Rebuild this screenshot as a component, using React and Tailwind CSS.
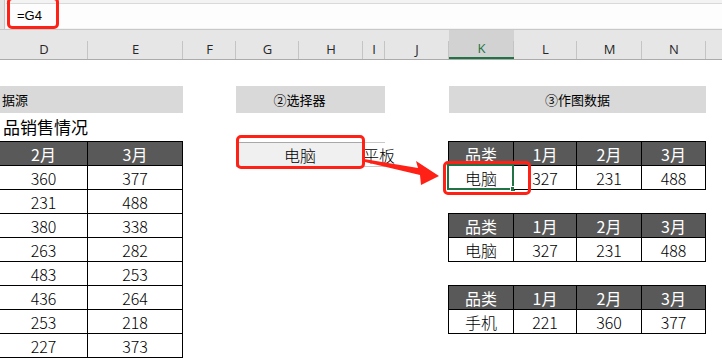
import React from 'react';

const cols = ['D', 'E', 'F', 'G', 'H', 'I', 'J', 'K', 'L', 'M', 'N', ''];
const colW = [88, 95, 53, 63, 64, 22, 64, 65, 63, 65, 64, 16];

const feb = [360, 231, 380, 263, 483, 436, 253, 227];
const mar = [377, 488, 338, 282, 253, 264, 218, 373];

const cjk = { fontFamily: '"Noto Sans CJK SC", "Noto Sans", sans-serif' };

const ColumnHeader = () => (
  <div className="flex h-[30px] bg-[#e6e6e6] border-b border-[#ababab]">
    {cols.map((c, i) => (
      <div
        key={i}
        style={{ width: colW[i] }}
        className={
          c === 'K'
            ? 'relative flex items-center justify-center shrink-0 bg-[#d2d2d2] border-b-2 border-[#217346] text-[13px] text-[#217346]'
            : 'relative flex items-center justify-center shrink-0 text-[13px] text-[#262626]'
        }
      >
        <span className="pt-[10px]" style={{ fontFamily: '"Open Sans", "Liberation Sans", sans-serif' }}>{c}</span>
        {i < cols.length - 1 && (
          <div className="absolute right-0 top-[11px] bottom-0 w-px bg-[#c4c4c4]" />
        )}
      </div>
    ))}
  </div>
);

const HeadCell = ({ children }) => (
  <div className="flex items-center justify-center bg-[#595959] text-white text-[16px] border-r border-b border-black">
    {children}
  </div>
);

const Cell = ({ children, selected }) => (
  <div className="relative flex items-center justify-center bg-white text-black text-[16px] font-light border-r border-b border-black">
    {children}
    {selected && (
      <div className="absolute -left-[2px] -top-[2px] -right-px -bottom-px border-2 border-[#217346]">
        <div className="absolute -right-[4px] -bottom-[4px] w-[6px] h-[6px] bg-[#217346] border border-white" />
      </div>
    )}
  </div>
);

const ChartTable = ({ name, vals, selected, row }) => (
  <div
    className={`col-start-8 col-span-4 ${row} grid grid-cols-[65px_63px_65px_64px] grid-rows-[24px_24px] border-t border-l border-black -mt-px -ml-px`}
    style={cjk}
  >
    <HeadCell>品类</HeadCell>
    <HeadCell>1月</HeadCell>
    <HeadCell>2月</HeadCell>
    <HeadCell>3月</HeadCell>
    <Cell selected={selected}>{name}</Cell>
    {vals.map((v, i) => (
      <Cell key={i}>{v}</Cell>
    ))}
  </div>
);

export default function App() {
  return (
    <div className="relative w-[722px] h-[359px] overflow-hidden bg-white" style={cjk}>
      {/* formula bar */}
      <div className="flex h-[30px] bg-[#f3f3f3] border-b border-[#c8c8c8]">
        <div className="w-[5px] shrink-0 bg-[#e6e6e6] border-r border-[#c6c6c6]" />
        <div className="flex-1 mt-[3px] mb-px ml-px bg-[#fdfdfd] border-t border-[#d9d9d9] flex items-center pl-[11px]">
          <span className="text-[13px] text-black" style={{ fontFamily: '"Liberation Sans", Arial, sans-serif' }}>=G4</span>
        </div>
      </div>

      <ColumnHeader />

      {/* sheet body */}
      <div className="grid grid-cols-[88px_95px_53px_63px_64px_22px_64px_65px_63px_65px_64px_16px] grid-rows-[26px_27px_29px_repeat(9,24px)]">
        {/* section bars */}
        <div className="col-start-1 col-span-2 row-start-2 bg-[#d9d9d9] flex items-center pl-[2px] text-[13px] text-black">
          据源
        </div>
        <div className="col-start-4 col-span-3 row-start-2 bg-[#d9d9d9] flex items-center text-[13px] text-black">
          <div className="w-[127px] text-center">②选择器</div>
        </div>
        <div className="col-start-8 col-span-4 row-start-2 bg-[#d9d9d9] flex items-center justify-center text-[13px] text-black">
          ③作图数据
        </div>

        {/* title */}
        <div className="col-start-1 col-span-3 row-start-3 flex items-center pl-[3px] pb-[2px] text-[17px] text-black whitespace-nowrap">
          品销售情况
        </div>

        {/* source table */}
        <div className="col-start-1 col-span-2 row-start-4 row-span-9 grid grid-cols-[88px_95px] auto-rows-[24px] border-t border-black -mt-px">
          <HeadCell>2月</HeadCell>
          <HeadCell>3月</HeadCell>
          {feb.map((v, i) => (
            <React.Fragment key={i}>
              <Cell>{v}</Cell>
              <Cell>{mar[i]}</Cell>
            </React.Fragment>
          ))}
        </div>

        {/* selector control */}
        <div className="col-start-4 col-span-3 row-start-4 flex h-[25px] font-light">
          <div className="w-[127px] shrink-0 bg-[#f0f0f0] border-t border-l border-b border-[#a8a8a8] flex items-center justify-center text-[16px] text-black">
            电脑
          </div>
          <div className="w-[22px] shrink-0 bg-white border-t border-b border-[#c8c8c8] flex items-center text-[16px] text-black whitespace-nowrap overflow-visible">
            平板
          </div>
        </div>

        {/* chart data tables */}
        <ChartTable row="row-start-4 row-span-2" name="电脑" vals={[327, 231, 488]} selected />
        <ChartTable row="row-start-7 row-span-2" name="电脑" vals={[327, 231, 488]} />
        <ChartTable row="row-start-10 row-span-2" name="手机" vals={[221, 360, 377]} />
      </div>

      {/* annotations */}
      <div className="absolute left-[7px] -top-[3px] w-[52px] h-[32px] border-[3px] border-[#ff2016] rounded-[5px]" />
      <div className="absolute left-[236px] top-[135px] w-[129px] h-[34px] border-[3px] border-[#ff2016] rounded-[5px]" />
      <div className="absolute left-[443px] top-[161px] w-[88px] h-[34px] border-[3px] border-[#ff2016] rounded-[5px]" />
      <svg className="absolute left-0 top-0" width="722" height="359" viewBox="0 0 722 359">
        <polygon
          points="364,159 418,168 416,161 439,176 421,185 420,175 365,162"
          fill="#ff2016"
        />
      </svg>
    </div>
  );
}
